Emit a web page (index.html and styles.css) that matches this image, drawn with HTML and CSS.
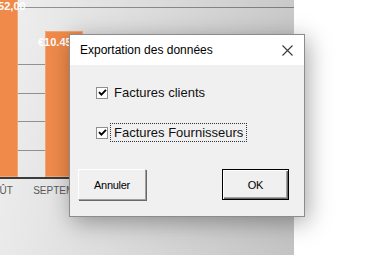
FILE: index.html
```html
<!DOCTYPE html>
<html lang="fr">
<head>
<meta charset="UTF-8">
<meta name="viewport" content="width=device-width, initial-scale=1.0">
<title>Exportation des données</title>
<link rel="stylesheet" href="styles.css">
</head>
<body>

<div class="screen">
  <div class="chart">
    <div class="plot">
      <div class="bars">
        <div class="bar" style="height: 190px;"><span class="value value-aug">€52,00</span></div>
        <div class="bar" style="height: 146px;"><span class="value value-sep">€10.45</span></div>
      </div>
    </div>
    <div class="axis-labels">
      <span class="month">AOÛT</span>
      <span class="month">SEPTEMBRE</span>
    </div>
  </div>

  <div class="dialog">
    <div class="dialog-title">
      <span>Exportation des données</span>
      <svg class="close-icon" width="11" height="11" viewBox="0 0 11 11">
        <path d="M0.5 0.5 L10.5 10.5 M10.5 0.5 L0.5 10.5" stroke="#3a3a3a" stroke-width="1.1" fill="none"/>
      </svg>
    </div>
    <div class="dialog-body">
      <div class="check-row">
        <span class="checkbox">
          <svg width="9" height="9" viewBox="0 0 9 9"><path d="M1 4.2 L3.4 6.6 L8 1.8" stroke="#000" stroke-width="1.9" fill="none"/></svg>
        </span>
        <span class="check-label">Factures clients</span>
      </div>
      <div class="check-row">
        <span class="checkbox">
          <svg width="9" height="9" viewBox="0 0 9 9"><path d="M1 4.2 L3.4 6.6 L8 1.8" stroke="#000" stroke-width="1.9" fill="none"/></svg>
        </span>
        <span class="check-label focused">Factures Fournisseurs</span>
      </div>
      <div class="buttons">
        <button class="btn">Annuler</button>
        <button class="btn btn-default">OK</button>
      </div>
    </div>
  </div>
</div>

</body>
</html>
```

FILE: styles.css
```css
* {
  margin: 0;
  padding: 0;
  box-sizing: border-box;
}

body {
  background: #ffffff;
  font-family: 'Liberation Sans', Arial, sans-serif;
  color: #000000;
}

.screen {
  position: relative;
  width: 377px;
  height: 264px;
  overflow: hidden;
}

/* chart behind the dialog */
.chart {
  width: 294px;
  height: 255px;
  overflow: hidden;
  background: linear-gradient(100deg, #f0f0f0 0%, #dcdcdc 45%, #c3c3c3 100%);
}

.plot {
  height: 179px;
  border-bottom: 2px solid #3c3c3c;
  background:
    linear-gradient(rgba(0, 0, 0, 0.38), rgba(0, 0, 0, 0.38)) 0 7px / 100% 1px no-repeat,
    linear-gradient(rgba(0, 0, 0, 0.38), rgba(0, 0, 0, 0.38)) 0 64px / 100% 1px no-repeat,
    linear-gradient(rgba(0, 0, 0, 0.38), rgba(0, 0, 0, 0.38)) 0 93px / 100% 1px no-repeat,
    linear-gradient(rgba(0, 0, 0, 0.38), rgba(0, 0, 0, 0.38)) 0 121px / 100% 1px no-repeat,
    linear-gradient(rgba(0, 0, 0, 0.38), rgba(0, 0, 0, 0.38)) 0 150px / 100% 1px no-repeat;
  display: flex;
  align-items: flex-end;
}

.bars {
  display: flex;
  align-items: flex-end;
  gap: 27px;
  margin-left: -20px;
}

.bar {
  position: relative;
  width: 38px;
  background: #ef8a4a;
  box-shadow: inset 0 0 0 1px rgba(255, 255, 255, 0.25);
}

.value {
  position: absolute;
  font-size: 11px;
  font-weight: bold;
  color: #ffffff;
  white-space: nowrap;
}

.value-aug {
  left: 12px;
  top: 13px;
}

.value-sep {
  left: -7px;
  top: 5px;
}

.axis-labels {
  display: flex;
  gap: 27px;
  margin-left: -20px;
  margin-top: 6px;
}

.month {
  width: 38px;
  display: flex;
  justify-content: center;
  white-space: nowrap;
  font-size: 10px;
  line-height: 12px;
  color: #595959;
}

/* dialog */
.dialog {
  position: absolute;
  left: 69px;
  top: 34px;
  width: 236px;
  border: 1px solid #8c8c8c;
  background: #f0f0f0;
  box-shadow: 3px 5px 22px rgba(0, 0, 0, 0.35);
}

.dialog-title {
  height: 30px;
  background: #ffffff;
  display: flex;
  align-items: center;
  justify-content: space-between;
  padding: 0 11px 0 10px;
  font-size: 12px;
}

.close-icon {
  display: block;
}

.dialog-body {
  display: flex;
  flex-direction: column;
  padding: 18px 15px 16px 8px;
}

.check-row {
  display: flex;
  align-items: center;
  height: 19px;
  padding-left: 18px;
}

.check-row + .check-row {
  margin-top: 21px;
}

.checkbox {
  width: 12px;
  height: 12px;
  background: #ffffff;
  border: 1px solid #8e8f8f;
  display: flex;
  align-items: center;
  justify-content: center;
}

.check-label {
  margin-left: 2px;
  padding: 0 3px;
  height: 19px;
  line-height: 17px;
  border: 1px dotted transparent;
  font-size: 13px;
  color: #111111;
}

.check-label.focused {
  border-color: #333333;
}

.buttons {
  display: flex;
  justify-content: space-between;
  margin-top: 27px;
}

.btn {
  width: 68px;
  height: 31px;
  background: #f0f0f0;
  font-family: 'Liberation Sans', Arial, sans-serif;
  font-size: 11px;
  letter-spacing: -0.3px;
  color: #000000;
  border: 1px solid;
  border-color: #ffffff #a0a0a0 #a0a0a0 #ffffff;
  box-shadow: 1px 1px 0 #696969;
}

.btn-default {
  width: 67px;
  border: 1px solid #000000;
  box-shadow: inset 1px 1px 0 #ffffff, inset -1px -1px 0 #696969, inset -2px -2px 0 #a0a0a0;
}
```
